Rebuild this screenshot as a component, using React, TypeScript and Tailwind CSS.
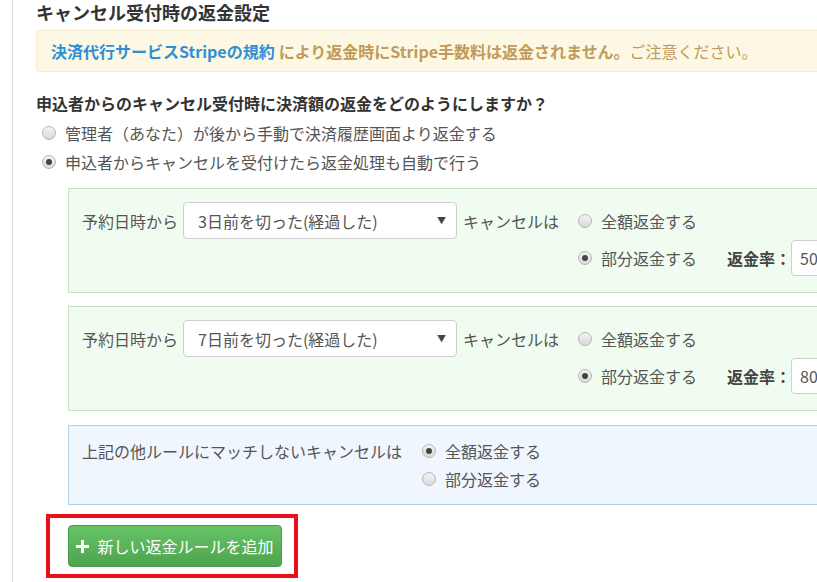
import React from 'react';

const font = { fontFamily: '"Noto Sans CJK JP", "Noto Sans", sans-serif' };

function Radio({ checked }: { checked?: boolean }) {
  return (
    <span className="inline-flex h-[14px] w-[14px] shrink-0 items-center justify-center rounded-full border border-[#b5b5b5] bg-gradient-to-b from-[#f4f4f4] to-[#d9d9d9]">
      {checked && <span className="h-[6px] w-[6px] rounded-full bg-[#444]" />}
    </span>
  );
}

function Select({ value }: { value: string }) {
  return (
    <div className="flex h-[37px] w-[274px] items-center justify-between rounded-[4px] border border-[#cfcfcf] bg-white pl-[14px] pr-[10px] text-[16px] text-[#555]">
      <span>{value}</span>
      <span className="text-[9px] text-[#444]">▼</span>
    </div>
  );
}

function RulePanel({ days, rate }: { days: string; rate: string }) {
  return (
    <div className="flex items-start overflow-hidden border border-[#c7e3bd] bg-[#f1fcf0] px-[13px] pt-[13px] pb-[16px] text-[16px] text-[#555]">
      <div className="flex h-[37px] shrink-0 items-center">
        <span className="w-[101px]">予約日時から</span>
        <Select value={days} />
        <span className="ml-[6px] w-[115px]">キャンセルは</span>
      </div>
      <div className="flex shrink-0 flex-col">
        <div className="flex h-[37px] items-center gap-[9px]">
          <Radio />
          <span>全額返金する</span>
        </div>
        <div className="flex h-[37px] items-center">
          <Radio checked />
          <span className="ml-[9px] w-[126px]">部分返金する</span>
          <span className="w-[64px] font-bold text-[#444]">返金率：</span>
          <div className="flex h-[36px] w-[80px] items-center rounded-l-[4px] border border-[#cfcfcf] bg-white pl-[8px]">
            {rate}
          </div>
        </div>
      </div>
    </div>
  );
}

export default function App() {
  return (
    <div className="h-[582px] w-[817px] overflow-hidden bg-white" style={font}>
      <div className="ml-[12px] h-full border-l border-[#dcdcdc] pl-[23px]">
        {/* Heading */}
        <h2 className="h-[24px] text-[18px] leading-[24px] font-bold text-[#333]">
          キャンセル受付時の返金設定
        </h2>

        {/* Notice */}
        <div className="mt-[6px] -mr-[10px] flex h-[42px] items-center rounded-[4px] border border-[#f7ebce] bg-[#fcf8e3] pl-[14px] text-[16px] whitespace-nowrap">
          <span className="font-bold text-[#2f8fd6]">決済代行サービスStripeの規約</span>
          <span className="ml-[4px] font-bold text-[#c29a5a]">により返金時にStripe手数料は返金されません。</span>
          <span className="text-[#c29a5a]">ご注意ください。</span>
        </div>

        {/* Question */}
        <p className="mt-[19px] text-[16px] leading-[24px] font-bold text-[#333]">
          申込者からのキャンセル受付時に決済額の返金をどのようにしますか？
        </p>
        <div className="mt-[3px] flex flex-col text-[16px] text-[#555]">
          <label className="flex h-[29px] items-center gap-[9px] pl-[6px]">
            <Radio />
            管理者（あなた）が後から手動で決済履歴画面より返金する
          </label>
          <label className="flex h-[29px] items-center gap-[9px] pl-[6px]">
            <Radio checked />
            申込者からキャンセルを受付けたら返金処理も自動で行う
          </label>
        </div>

        {/* Rules */}
        <div className="-mr-[10px] mt-[12px] ml-[32px] flex flex-col">
          <RulePanel days="3日前を切った(経過した)" rate="50" />
          <div className="mt-[13px]">
            <RulePanel days="7日前を切った(経過した)" rate="80" />
          </div>

          <div className="mt-[14px] flex h-[80px] items-start border border-[#b1d2ea] bg-[#eff6fe] px-[13px] pt-[13px] text-[16px] text-[#555]">
            <span className="w-[340px] leading-[24px]">上記の他ルールにマッチしないキャンセルは</span>
            <div className="flex flex-col">
              <div className="flex h-[24px] items-center gap-[9px]">
                <Radio checked />
                <span>全額返金する</span>
              </div>
              <div className="mt-[4px] flex h-[24px] items-center gap-[9px]">
                <Radio />
                <span>部分返金する</span>
              </div>
            </div>
          </div>
        </div>

        {/* Add rule */}
        <div className="mt-[9px] ml-[10px] w-[252px] border-4 border-[#e8101a] pt-[7px] pr-[12px] pb-[7px] pl-[18px]">
          <button className="flex h-[42px] w-[214px] items-center justify-center gap-[8px] rounded-[4px] border border-[#4a9a4a] bg-gradient-to-b from-[#66c466] to-[#4fa34f] text-[16px] text-white">
            <svg width="13" height="13" viewBox="0 0 13 13">
              <path d="M5 0h3v5h5v3H8v5H5V8H0V5h5z" fill="white" />
            </svg>
            新しい返金ルールを追加
          </button>
        </div>
      </div>
    </div>
  );
}
